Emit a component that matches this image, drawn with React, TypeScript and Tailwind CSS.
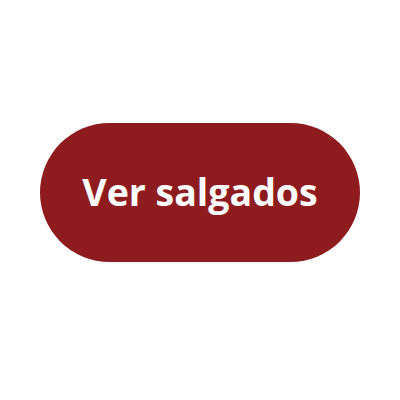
export default function App() {
  return (
    <div className="w-[400px] h-[400px] bg-white flex justify-center pt-[123px]">
      <button
        type="button"
        className="w-[320px] h-[139px] rounded-full bg-[#8e1c1e] text-white text-[37.5px] font-bold font-['Open_Sans',sans-serif] flex items-center justify-center"
      >
        Ver salgados
      </button>
    </div>
  );
}
